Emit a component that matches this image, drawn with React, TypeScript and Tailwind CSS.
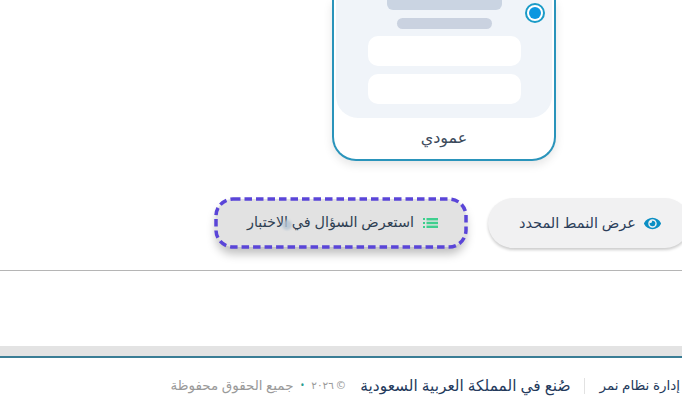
import { FaEye } from "react-icons/fa"

function ListIcon() {
    return (
        <svg viewBox="0 0 15 10" className="h-[10px] w-[15px] shrink-0 fill-[#3ecf8e]">
            <rect x="0" y="0" width="2" height="2" />
            <rect x="0" y="4" width="2" height="2" />
            <rect x="0" y="8" width="2" height="2" />
            <rect x="3.5" y="0" width="11.5" height="2.4" />
            <rect x="3.5" y="3.8" width="11.5" height="2.4" />
            <rect x="3.5" y="7.6" width="11.5" height="2.4" />
        </svg>
    )
}

function FocusRing() {
    return (
        <svg viewBox="0 0 250 48" className="absolute left-0 top-0 h-[48px] w-[250px] overflow-visible" fill="none">
            <rect x="0" y="0" width="250" height="48" rx="17" stroke="#5a45d8" strokeWidth="3.5" strokeDasharray="7.5 4" />
        </svg>
    )
}

function LayoutCard() {
    return (
        <div className="relative mr-[126px] h-[161px] w-[224px] rounded-b-[24px] border-x-2 border-b-2 border-[#2a94bb] bg-white shadow-[0_4px_10px_rgba(0,0,0,0.1)]">
            <div className="mx-[2px] flex h-[118px] flex-col items-center justify-end rounded-b-[22px] bg-[#f0f4f9] pb-[14px]">
                <div className="h-[10px] w-[115px] rounded-b-[6px] bg-[#cad4e2]" />
                <div className="mt-[8px] h-[11px] w-[95px] rounded-full bg-[#cad2e0]" />
                <div className="mt-[7px] h-[30px] w-[153px] rounded-[10px] bg-white" />
                <div className="mt-[8px] h-[30px] w-[153px] rounded-[10px] bg-white" />
            </div>
            <div className="absolute left-[191px] top-[3px] flex h-[20px] w-[20px] items-center justify-center rounded-full border-2 border-[#1a9bc7] bg-white">
                <div className="h-[12px] w-[12px] rounded-full bg-[#0c97e0]" />
            </div>
            <div className="mt-[8px] text-center text-[16px] leading-[22px] text-[#3c4a5c]">عمودي</div>
        </div>
    )
}

export default function App() {
    return (
        <div dir="rtl" className="flex h-[408px] w-[682px] flex-col overflow-hidden bg-white font-['Noto_Sans','DejaVu_Sans',sans-serif]">
            <div className="h-[271px] shrink-0 border-b border-[#b5b5b5]">
                <LayoutCard />
                <div className="mr-[-8px] mt-[37px] flex items-center gap-[22px]">
                    <button className="flex h-[50px] w-[202px] shrink-0 items-center gap-[8px] rounded-[25px] bg-[#f1f1f2] pr-[29px] text-[14.5px] text-[#2c3e5a] shadow-[0_2px_3px_rgba(0,0,0,0.2)]">
                        <FaEye className="h-[17px] w-[17px] text-[#0b8fc4]" />
                        <span>عرض النمط المحدد</span>
                    </button>
                    <button className="relative flex h-[48px] w-[250px] shrink-0 items-center gap-[9px] rounded-[17px] bg-[#e2e2e2] pr-[28px] text-[14.4px] text-[#2f3f52] shadow-[0_7px_10px_rgba(0,0,0,0.25)]">
                        <ListIcon />
                        <span className="-translate-y-px">استعرض السؤال في الاختبار</span>
                        <span className="absolute left-[66px] top-[21px] h-[10px] w-[10px] rounded-full bg-[#b3c3d2] opacity-80 blur-[1px]" />
                        <FocusRing />
                    </button>
                </div>
            </div>
            <div className="h-[75px] shrink-0" />
            <div className="h-[10px] shrink-0 bg-[#e3e3e3]" />
            <div className="h-[2px] shrink-0 bg-[#3a7d95]" />
            <div className="mr-[2px] mt-[16px] flex items-center whitespace-nowrap">
                <span className="text-[13.5px] text-[#243a5c]">إدارة نظام نمر</span>
                <span className="ml-[13px] mr-[15px] h-[16px] w-px bg-[#e2e2e2]" />
                <span className="text-[15.4px] text-[#243a5c]">صُنع في المملكة العربية السعودية</span>
                <span className="mr-[15px] text-[10.5px] text-[#9a9a9a]">© ٢٠٢٦</span>
                <span className="mx-[7px] text-[10px] text-[#2a9d8f]">•</span>
                <span className="text-[13.5px] text-[#9a9a9a]">جميع الحقوق محفوظة</span>
            </div>
        </div>
    )
}
